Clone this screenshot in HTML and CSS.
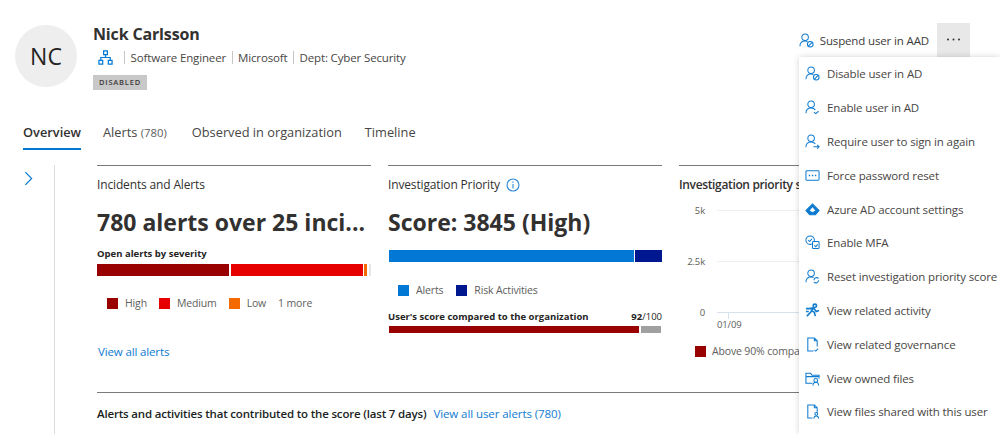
FILE: index.html
```html
<!DOCTYPE html>
<html lang="en">
<head>
  <meta charset="UTF-8" />
  <meta name="viewport" content="width=device-width, initial-scale=1.0"/>
  <title>Nick Carlsson</title>
  <link rel="stylesheet" href="styles.css">
</head>
<body>
  <div class="page">
    <header class="user-header">
      <div class="avatar">NC</div>
      <div class="user-info">
        <h1>Nick Carlsson</h1>
        <div class="user-meta">
          <svg class="org-icon" viewBox="0 0 16 16"><path d="M6 1h4v4H6zM1 11h4v4H1zM11 11h4v4h-4zM8 5v3M3 11V8h10v3"/></svg>
          <span class="sep"></span><span>Software Engineer</span>
          <span class="sep"></span><span>Microsoft</span>
          <span class="sep"></span><span>Dept: Cyber Security</span>
        </div>
        <span class="tag">DISABLED</span>
      </div>
      <div class="actions">
        <div class="suspend">
          <svg class="icon" viewBox="0 0 16 16"><circle cx="6.500" cy="4.500" r="3.500"/><path d="M1 14c0-3.500 2-5.500 5.500-5.500 1 0 1.800.2 2.500.5"/><circle cx="12" cy="12" r="3"/><path d="M10 14l4-4"/></svg>
          Suspend user in AAD
        </div>
        <div class="more">
          <svg class="dots-icon" viewBox="0 0 15 3"><circle cx="2" cy="1.500" r="1"/><circle cx="7.500" cy="1.500" r="1"/><circle cx="13" cy="1.500" r="1"/></svg>
        </div>
      </div>
    </header>

    <nav class="tabs">
      <a class="tab active">Overview</a>
      <a class="tab">Alerts <span class="count">(780)</span></a>
      <a class="tab">Observed in organization</a>
      <a class="tab">Timeline</a>
    </nav>

    <div class="content">
      <div class="rail">
        <svg class="chevron" viewBox="0 0 10 16"><path d="M1.500 1l7 7-7 7"/></svg>
      </div>
      <main class="main">
        <div class="cards">
          <section class="card">
            <h3>Incidents and Alerts</h3>
            <div class="big">780 alerts over 25 inci...</div>
            <div class="small-head">Open alerts by severity</div>
            <div class="bar">
              <i class="high" style="width:132.500px"></i>
              <i class="medium" style="width:132.500px"></i>
              <i class="low" style="width:2.700px"></i>
              <i class="rest" style="width:2.300px"></i>
            </div>
            <div class="legend legend-alerts">
              <span><i class="high"></i>High</span>
              <span><i class="medium"></i>Medium</span>
              <span><i class="low"></i>Low</span>
              <span>1 more</span>
            </div>
            <a class="link view-all">View all alerts</a>
          </section>

          <section class="card">
            <h3>Investigation Priority
              <svg class="info" viewBox="0 0 14 14"><circle cx="7" cy="7" r="6"/><path d="M7 6v4.500M7 3.500v1.200"/></svg>
            </h3>
            <div class="big">Score: 3845 (High)</div>
            <div class="bar score-bar">
              <i class="blue" style="width:244.500px"></i>
              <i class="navy" style="width:26.500px"></i>
            </div>
            <div class="legend legend-score">
              <span><i class="blue"></i>Alerts</span>
              <span><i class="navy"></i>Risk Activities</span>
            </div>
            <div class="small-head compare"><span>User's score compared to the organization</span><span class="out-of"><b>92</b>/100</span></div>
            <div class="bar thin">
              <i class="high" style="width:250.300px"></i>
              <i class="gray" style="width:20.500px"></i>
            </div>
          </section>

          <section class="card card-chart">
            <h3>Investigation priority score</h3>
            <div class="chart">
              <div class="grid-row"><span>5k</span><i></i></div>
              <div class="grid-row"><span>2.5k</span><i></i></div>
              <div class="grid-row base"><span>0</span><i></i></div>
              <div class="tick"></div>
              <div class="date">01/09</div>
            </div>
            <div class="legend legend-chart">
              <span><i class="high"></i>Above 90% compared</span>
            </div>
          </section>
        </div>
        <div class="contrib">
          <b>Alerts and activities that contributed to the score (last 7 days)</b>
          <a class="link">View all user alerts (780)</a>
        </div>
      </main>
    </div>

    <ul class="menu">
      <li><svg class="icon" viewBox="0 0 16 16"><circle cx="6.500" cy="4.500" r="3.500"/><path d="M1 14c0-3.500 2-5.500 5.500-5.500 1 0 1.800.2 2.500.5"/><circle cx="12" cy="12" r="3"/><path d="M10 14l4-4"/></svg>Disable user in AD</li>
      <li><svg class="icon" viewBox="0 0 16 16"><circle cx="6.500" cy="4.500" r="3.500"/><path d="M1 14c0-3.500 2-5.500 5.500-5.500 2 0 3.500.7 4.500 2M9.500 13l2 1.500 3-2.500"/></svg>Enable user in AD</li>
      <li><svg class="icon" viewBox="0 0 16 16"><circle cx="6.500" cy="4.500" r="3.500"/><path d="M1 14c0-3.500 2-5.500 5.500-5.500 2 0 3.500.7 4.500 2M9 13.500h6M13 11.500l2 2-2 2"/></svg>Require user to sign in again</li>
      <li><svg class="icon" viewBox="0 0 16 16"><rect x="1" y="3" width="14" height="10" rx="1"/><path class="dots" d="M4 8h1.500M7.300 8h1.500M10.500 8h1.500"/></svg>Force password reset</li>
      <li><svg class="icon" viewBox="0 0 16 16"><path class="solid" d="M8 2l7 7-4 4.500H5L1 9z"/><path class="cut" d="M8 5.500L11 9 8 11 5 9z"/></svg>Azure AD account settings</li>
      <li><svg class="icon" viewBox="0 0 16 16"><circle cx="5.500" cy="5.500" r="4.500"/><path d="M3.500 5.500l1.500 1.500 2.500-3"/><rect class="paper" x="8" y="7" width="7" height="7.500" rx="1"/><path d="M10 11l1.500 1.500 2-2.500"/></svg>Enable MFA</li>
      <li><svg class="icon" viewBox="0 0 16 16"><circle cx="6.500" cy="4.500" r="3.500"/><path d="M1 14c0-3.500 2-5.500 5.500-5.500 1 0 1.800.2 2.500.5"/><path d="M9.500 12a3 3 0 0 1 5-2M14.500 12a3 3 0 0 1-5 2"/></svg>Reset investigation priority score</li>
      <li><svg class="icon icon-thick" viewBox="0 0 16 16"><circle cx="10.500" cy="3" r="1.800"/><path d="M9 5L6 10l-4 4M9 5l3 4 3-1M7 8l3 2 1 4M5 6l4-1M1 6h4M1 9h3"/></svg>View related activity</li>
      <li><svg class="icon" viewBox="0 0 16 16"><path d="M9 15H3V1h7l3 3v6M10 1v3h3M10 14l1.500 1L14 12.500"/></svg>View related governance</li>
      <li><svg class="icon" viewBox="0 0 16 16"><path d="M8 13H1V2.500h5l1.500 2H15V8M1 6h14"/><circle cx="11.500" cy="10" r="2"/><path d="M8.500 15.500c0-2 1-3.500 3-3.500s3 1.500 3 3.500"/></svg>View owned files</li>
      <li><svg class="icon" viewBox="0 0 16 16"><path d="M8 15H3V1h7l3 3v5M10 1v3h3"/><circle cx="12" cy="10.500" r="1.500"/><path d="M9.500 15.500c0-1.800 1-2.800 2.500-2.800s2.500 1 2.500 2.800"/></svg>View files shared with this user</li>
    </ul>
  </div>
</body>
</html>
```

FILE: styles.css
```css
* {
  box-sizing: border-box;
}

html, body {
  margin: 0;
  height: 100%;
  overflow: hidden;
}

body {
  font-family: "Open Sans", "Noto Sans", Arial, sans-serif;
  font-size: 11.500px;
  letter-spacing: -0.140px;
  color: #323130;
  background: #fff;
}

.page {
  position: relative;
  width: 1000px;
  height: 434px;
  overflow: hidden;
}

/* header */
.user-header {
  display: flex;
  height: 122px;
  padding: 25px 30px 0 15px;
}

.avatar {
  width: 62px;
  height: 62px;
  border-radius: 50%;
  background: #eeeeee;
  display: flex;
  align-items: center;
  justify-content: center;
  font-size: 23px;
  letter-spacing: 0;
  color: #252423;
}

.user-info {
  margin-left: 16px;
  margin-top: -1px;
}

h1 {
  margin: 0;
  font-size: 16px;
  line-height: 20px;
  font-weight: 700;
  letter-spacing: -0.150px;
}

.user-meta {
  display: flex;
  align-items: center;
  margin-top: 4px;
  height: 18px;
  color: #484644;
}

.org-icon {
  width: 15px;
  height: 15px;
  margin-left: 5px;
  fill: none;
  stroke: #0078d4;
  stroke-width: 1.300;
}

.sep {
  width: 1px;
  height: 13px;
  background: #c8c6c4;
  margin: 0 5.500px;
}

.org-icon + .sep {
  margin-left: 11px;
}

.tag {
  display: inline-block;
  margin-top: 9px;
  padding: 0 6px;
  height: 15px;
  line-height: 15px;
  background: #c8c8c8;
  color: #3b3a39;
  font-size: 7.500px;
  font-weight: 600;
  letter-spacing: 0.800px;
}

.actions {
  position: absolute;
  right: 30px;
  top: 23px;
  display: flex;
  align-items: center;
}

.suspend {
  display: flex;
  align-items: center;
  gap: 6px;
  height: 34px;
  margin-right: 8px;
  color: #3b3a39;
}

.more {
  display: flex;
  align-items: center;
  justify-content: center;
  width: 33px;
  height: 34px;
  background: #e8e8e8;
  padding-bottom: 2px;
}

.dots-icon {
  width: 15px;
  height: 3px;
  fill: #323130;
}

.icon {
  width: 15px;
  height: 15px;
  flex: none;
  fill: none;
  stroke: #0f7bd0;
  stroke-width: 1.100;
}

.icon-thick {
  stroke-width: 1.700;
}

/* tabs */
.tabs {
  display: flex;
  gap: 23px;
  height: 28px;
  margin-left: 23px;
  font-size: 12.800px;
  letter-spacing: 0;
  color: #484644;
}

.tab {
  height: 28px;
  line-height: 20px;
}

.tab.active {
  color: #323130;
  font-weight: 600;
  border-bottom: 2px solid #0078d4;
  margin-right: -1px;
}

.count {
  font-size: 11.300px;
  padding-right: 2px;
  color: #605e5c;
}

/* content */
.content {
  display: flex;
  margin-top: 15px;
}

.rail {
  width: 55px;
  height: 300px;
  border-right: 1px solid #dcdcdc;
  padding: 6px 0 0 24px;
  margin-right: 42px;
}

.chevron {
  width: 9px;
  height: 15px;
  fill: none;
  stroke: #0078d4;
  stroke-width: 1.300;
}

.main {
  width: 720px;
}

.cards {
  display: flex;
  gap: 17px;
  height: 228px;
  border-bottom: 1px solid #7a7a7a;
}

.card {
  width: 274px;
  flex: none;
  border-top: 1px solid #7a7a7a;
  position: relative;
}

h3 {
  margin: 10px 0 0;
  font-size: 12px;
  line-height: 17px;
  font-weight: 400;
  letter-spacing: -0.150px;
  color: #323130;
  display: flex;
  align-items: center;
  gap: 6px;
  white-space: nowrap;
}

.card-chart h3 {
  font-weight: 600;
  letter-spacing: -0.350px;
}

.info {
  width: 14px;
  height: 14px;
  fill: none;
  stroke: #2b88d8;
  stroke-width: 1.100;
}

.big {
  margin-top: 13px;
  font-size: 23px;
  line-height: 32px;
  font-weight: 700;
  letter-spacing: 0;
  white-space: nowrap;
  color: #323130;
}

.small-head {
  margin-top: 9px;
  font-size: 9.500px;
  line-height: 14px;
  font-weight: 700;
  letter-spacing: 0;
  color: #252423;
}

.bar {
  display: flex;
  gap: 1.600px;
  height: 12px;
  margin-top: 3px;
}

.bar i, .legend i {
  display: block;
}

.high { background: #990000; }
.medium { background: #e60000; }
.low { background: #f56a00; }
.rest { background: #e6e6e6; }
.blue { background: #0078d4; }
.navy { background: #00188f; }
.gray { background: #a0a0a0; }

.legend {
  display: flex;
  gap: 12px;
  font-size: 10.500px;
  letter-spacing: -0.150px;
  color: #605e5c;
}

.legend span {
  display: flex;
  align-items: center;
  gap: 7px;
  white-space: nowrap;
}

.legend i {
  width: 11px;
  height: 11px;
}

.legend-alerts {
  margin: 20px 0 0 10px;
}

.legend-score {
  margin: 21px 0 0 10px;
  gap: 13px;
}

.score-bar {
  margin: 12px 0 0 1px;
}

.compare {
  display: flex;
  justify-content: space-between;
  margin-top: 13px;
}

.out-of {
  font-weight: 400;
}

.out-of b {
  font-weight: 700;
}

.thin {
  height: 7px;
  margin: 2px 0 0 1px;
}

.link {
  color: #0f7bd0;
}

.view-all {
  display: block;
  margin: 34px 0 0 1px;
}

/* third card runs in under the menu */
.chart {
  margin-top: 11px;
  height: 139px;
  position: relative;
}

.grid-row {
  display: flex;
  align-items: flex-start;
  height: 51px;
  font-size: 9.500px;
  line-height: 13px;
  color: #605e5c;
}

.grid-row span {
  width: 26px;
  text-align: right;
}

.grid-row i {
  flex: 1;
  margin: 6px 0 0 12px;
  height: 1px;
  background: #eeeeee;
}

.grid-row.base i {
  background: #d8e2ee;
}

.tick {
  position: absolute;
  left: 49px;
  top: 109px;
  width: 1px;
  height: 6px;
  background: #d8e2ee;
}

.date {
  position: absolute;
  left: 38px;
  top: 114px;
  font-size: 9.500px;
  line-height: 13px;
  color: #605e5c;
}

.legend-chart {
  margin: 1px 0 0 16px;
}

.legend-chart span {
  gap: 6px;
}

.contrib {
  display: flex;
  gap: 7px;
  margin-top: 12px;
  line-height: 18px;
  letter-spacing: -0.080px;
}

.contrib b {
  font-weight: 600;
  letter-spacing: -0.180px;
  color: #201f1e;
}

/* dropdown */
.menu {
  position: absolute;
  left: 799px;
  top: 57px;
  width: 201px;
  height: 377px;
  margin: 0;
  padding: 0;
  list-style: none;
  background: #fff;
  box-shadow: 0 0 6px rgba(0, 0, 0, 0.18);
  color: #484644;
}

.menu li {
  display: flex;
  align-items: center;
  gap: 7px;
  height: 33.800px;
  padding-left: 6px;
  white-space: nowrap;
}

.solid {
  fill: #0f7bd0;
}

.cut {
  fill: #fff;
  stroke: none;
}

.dots {
  stroke-width: 1.800;
}

.paper {
  fill: #fff;
}
```
